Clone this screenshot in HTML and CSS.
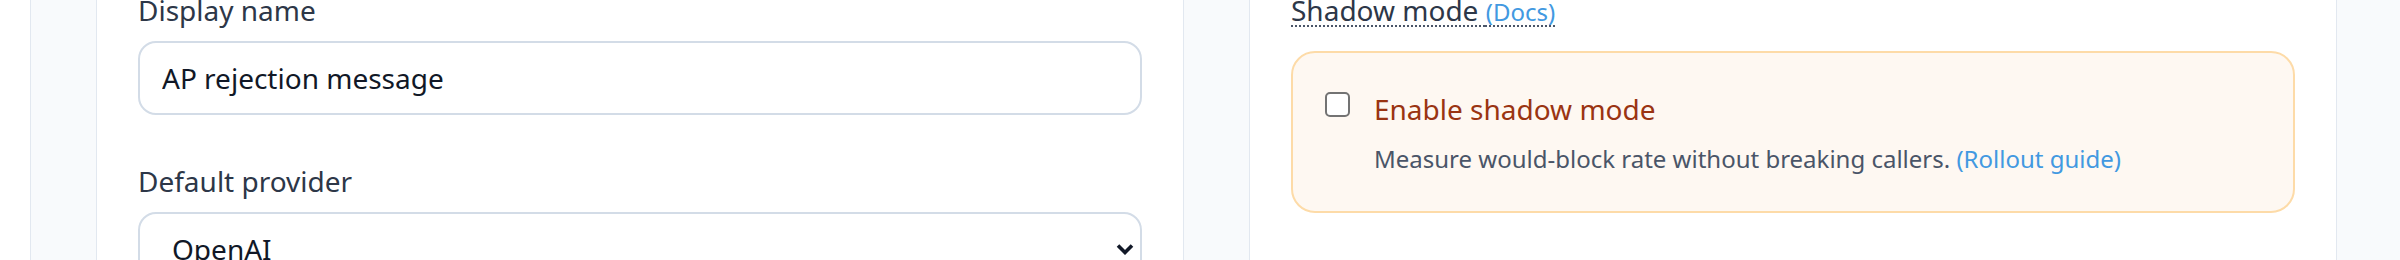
FILE: index.html
```html
<!DOCTYPE html>
<html lang="en">
<head>
    <meta charset="UTF-8">
    <meta name="viewport" content="width=device-width, initial-scale=1.0">
    <title>Policy settings</title>
    <link rel="stylesheet" href="styles.css">
</head>
<body>
    <div class="grid">
        <!-- previous card, only its right edge is in view -->
        <section class="card"></section>

        <section class="card">
            <div class="field">
                <label class="field-label" for="display-name">Display name</label>
                <input id="display-name" class="text-input" type="text" value="AP rejection message">
            </div>
            <div class="field">
                <label class="field-label" for="provider">Default provider</label>
                <div class="select-wrap">
                    <select id="provider" class="select-input">
                        <option>OpenAI</option>
                        <option>Anthropic</option>
                        <option>Azure OpenAI</option>
                    </select>
                    <svg class="select-arrow" width="18" height="12" viewBox="0 0 18 12">
                        <path d="M2 2.5 L9 9.5 L16 2.5" fill="none" stroke="#111827" stroke-width="3.6"/>
                    </svg>
                </div>
            </div>
        </section>

        <section class="card">
            <div class="field field-shadow">
                <span class="field-label help" title="Run the policy without blocking">Shadow mode <a href="#" class="docs">(Docs)</a></span>
            </div>
            <div class="notice">
                <input type="checkbox" id="shadow" class="check">
                <div class="notice-body">
                    <label for="shadow" class="notice-title">Enable shadow mode</label>
                    <div class="notice-desc">Measure would-block rate without breaking callers. <a href="#" class="docs">(Rollout guide)</a></div>
                </div>
            </div>
        </section>
    </div>
</body>
</html>
```

FILE: styles.css
```css
body {
    font-family: "Noto Sans", "Open Sans", sans-serif;
    margin: 0;
    padding: 0;
    height: 260px;
    overflow: hidden;
    background-color: #f8fafc;
}

.grid {
    display: flex;
    gap: 65px;
    margin-left: -1057px;
    margin-top: -11px;
}

.card {
    flex: 0 0 1088px;
    box-sizing: border-box;
    min-height: 400px;
    padding: 0 41px;
    background-color: #fff;
    border-left: 1px solid #e2e8f0;
    border-right: 1px solid #e2e8f0;
}

.field {
    margin-bottom: 45px;
}

.field-label {
    display: block;
    font-size: 28px;
    line-height: 42px;
    color: #2d3748;
    margin-bottom: 10px;
}

.field-shadow {
    margin-bottom: 0;
}

.field-shadow .field-label {
    margin-bottom: 18px;
}

.help {
    text-decoration: underline dotted #4a5568;
    text-decoration-thickness: 2px;
    text-underline-offset: 4px;
}

.docs {
    color: #4299e1;
    text-decoration: none;
    font-size: 24px;
}

.text-input,
.select-input {
    display: block;
    box-sizing: border-box;
    width: 100%;
    height: 74px;
    border: 2px solid #d3dce7;
    border-radius: 18px;
    background-color: #fff;
    font-family: inherit;
    font-size: 28px;
    color: #111827;
    outline: none;
}

.text-input {
    padding: 0 22px;
}

.select-wrap {
    position: relative;
}

.select-input {
    appearance: none;
    padding: 0 40px 0 32px;
}

.select-arrow {
    position: absolute;
    right: 8px;
    top: 50%;
    transform: translateY(-50%);
    pointer-events: none;
}

.notice {
    display: flex;
    align-items: flex-start;
    gap: 24px;
    padding: 35px 32px 34px;
    border: 2px solid #fddba8;
    border-radius: 24px;
    background-color: #fef8f2;
}

.check {
    appearance: none;
    flex-shrink: 0;
    width: 25px;
    height: 25px;
    margin: 4px 0 0;
    border: 2px solid #737373;
    border-radius: 5px;
    background-color: #fff;
}

.notice-title {
    display: block;
    font-size: 28px;
    line-height: 42px;
    color: #9a3412;
}

.notice-desc {
    margin-top: 11px;
    font-size: 24px;
    line-height: 36px;
    color: #4a5568;
}
```
